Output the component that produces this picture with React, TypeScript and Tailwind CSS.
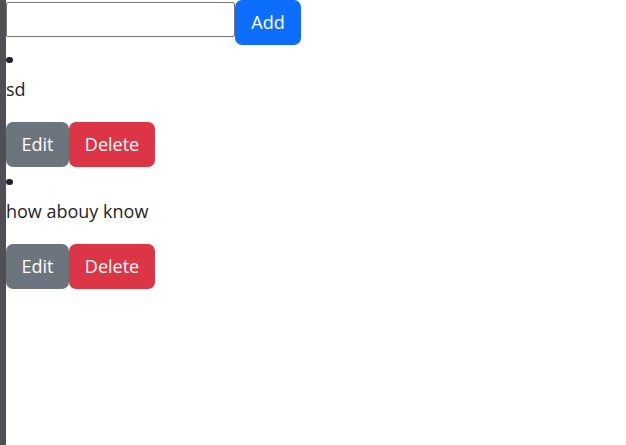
const todos = ['sd', 'how abouy know'];

function Item({ text }: { text: string }) {
  return (
    <li>
      <div className="flex h-[30.5px] items-center">
        <span className="mb-[1px] block h-[6.5px] w-[6.5px] rounded-full bg-[#212529]" />
      </div>
      <p className="mb-[19.5px] leading-[27px]">{text}</p>
      <div className="flex">
        <button className="h-[45px] w-[63px] rounded-[7px] bg-[#6c757d] text-white">Edit</button>
        <button className="h-[45px] w-[86px] rounded-[7px] bg-[#dc3545] text-white">Delete</button>
      </div>
    </li>
  );
}

export default function App() {
  return (
    <div className="flex min-h-screen bg-white font-['Segoe_UI','Open_Sans',sans-serif] text-[18px] text-[#212529]">
      <div className="w-[6px] shrink-0 bg-[#4f5055]" />
      <div className="flex-1">
        <div className="flex items-start">
          <input
            type="text"
            className="mt-[2px] h-[35px] w-[229px] rounded-[2px] border border-[#767676] px-1 outline-none"
          />
          <button className="h-[45px] w-[66px] rounded-[7px] bg-[#0d6efd] text-white">Add</button>
        </div>
        <ul>
          {todos.map((t) => (
            <Item key={t} text={t} />
          ))}
        </ul>
      </div>
    </div>
  );
}
